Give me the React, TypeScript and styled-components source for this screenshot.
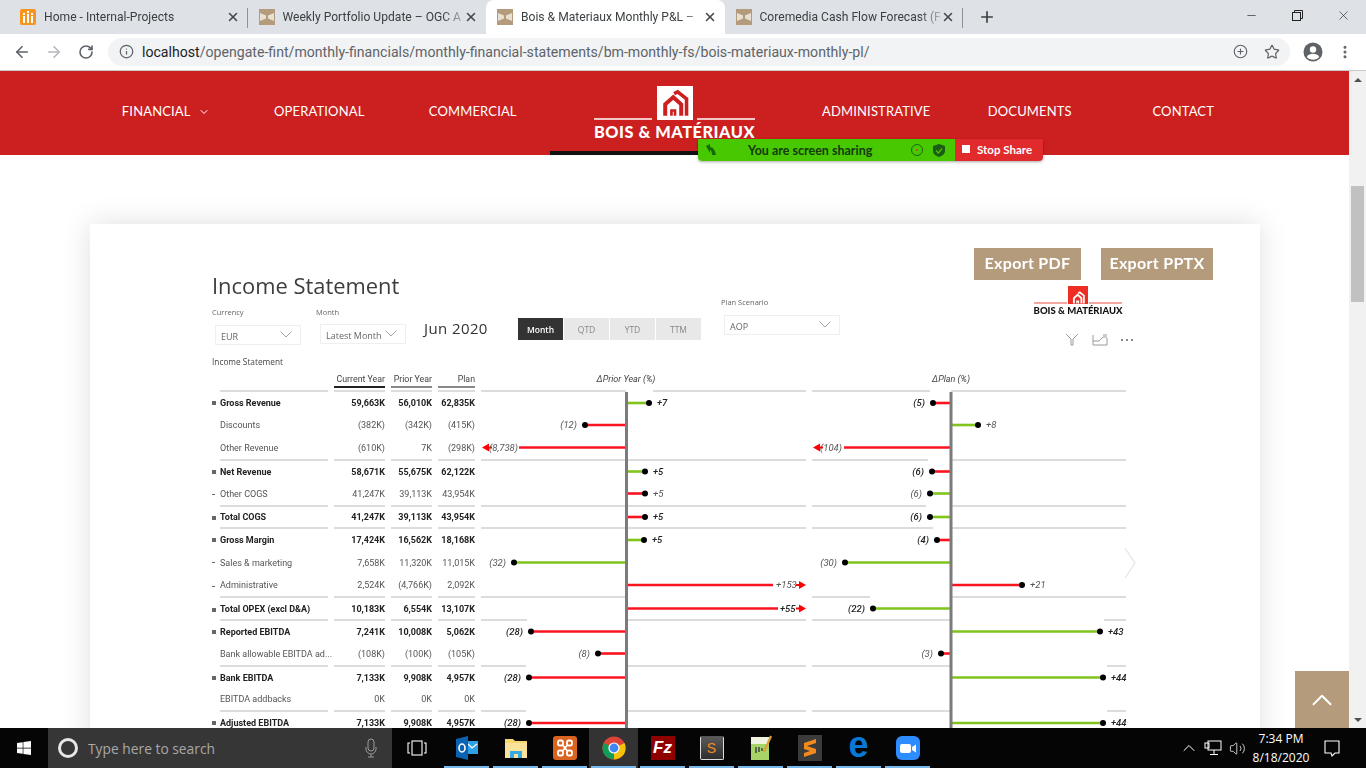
import styled, { createGlobalStyle } from 'styled-components'
import { ArrowLeft, ArrowRight, ChevronDown, ChevronUp, Info, Minus, MoreVertical, Plus, PlusCircle, RotateCw, Star, Volume2, X } from 'lucide-react'
import { FaWindows } from 'react-icons/fa'

const GlobalStyle = createGlobalStyle`
    html, body {
        margin: 0;
        padding: 0;
        background: #fff;
        overflow: hidden;
    }
    * {
        box-sizing: border-box;
    }
`

const tabs = [
    { title: 'Home - Internal-Projects', home: true },
    { title: 'Weekly Portfolio Update – OGC A' },
    { title: 'Bois & Materiaux Monthly P&L –', active: true },
    { title: 'Coremedia Cash Flow Forecast (F' }
]

type Delta = {
    v: number
    text: string
    color: 'red' | 'green'
    arrow?: number
    gap?: number
}

type Row = {
    label: string
    marker?: 'total' | 'minus'
    cur: string
    prior: string
    plan: string
    h: number
    sep?: boolean
    seps1?: number[][]
    seps2?: number[][]
    d1?: Delta
    d2?: Delta
}

const AXIS1 = 145.5
const AXIS2 = 139
const WIDTH1 = 325
const WIDTH2 = 314

const rows: Row[] = [
    { label: 'Gross Revenue', marker: 'total', cur: '59,663K', prior: '56,010K', plan: '62,835K', h: 22, d1: { v: 22.5, text: '+7', color: 'green' }, d2: { v: -18, text: '(5)', color: 'red' } },
    { label: 'Discounts', cur: '(382K)', prior: '(342K)', plan: '(415K)', h: 22, d1: { v: -41.5, text: '(12)', color: 'red' }, d2: { v: 27, text: '+8', color: 'green' } },
    { label: 'Other Revenue', cur: '(610K)', prior: '7K', plan: '(298K)', h: 25, sep: true, seps1: [[0, 325]], seps2: [[0, 116], [139, 314]], d1: { v: -107.5, text: '(8,738)', color: 'red', arrow: -144.5, gap: 1 }, d2: { v: -107, text: '(104)', color: 'red', arrow: -138, gap: 2 } },
    { label: 'Net Revenue', marker: 'total', cur: '58,671K', prior: '55,675K', plan: '62,122K', h: 21, d1: { v: 18.5, text: '+5', color: 'green' }, d2: { v: -19, text: '(6)', color: 'red' } },
    { label: 'Other COGS', marker: 'minus', cur: '41,247K', prior: '39,113K', plan: '43,954K', h: 25, sep: true, seps1: [[0, 325]], seps2: [[0, 114], [139, 314]], d1: { v: 18.5, text: '+5', color: 'red' }, d2: { v: -21, text: '(6)', color: 'green' } },
    { label: 'Total COGS', marker: 'total', cur: '41,247K', prior: '39,113K', plan: '43,954K', h: 22, sep: true, seps1: [[0, 325]], seps2: [[0, 121], [139, 314]], d1: { v: 18.5, text: '+5', color: 'red' }, d2: { v: -21, text: '(6)', color: 'green' } },
    { label: 'Gross Margin', marker: 'total', cur: '17,424K', prior: '16,562K', plan: '18,168K', h: 22, d1: { v: 17.5, text: '+5', color: 'green' }, d2: { v: -14, text: '(4)', color: 'red' } },
    { label: 'Sales & marketing', marker: 'minus', cur: '7,658K', prior: '11,320K', plan: '11,015K', h: 23, d1: { v: -112.5, text: '(32)', color: 'green' }, d2: { v: -106, text: '(30)', color: 'green' } },
    { label: 'Administrative', marker: 'minus', cur: '2,524K', prior: '(4,766K)', plan: '2,092K', h: 24, sep: true, seps1: [[0, 145.5]], seps2: [[0, 58], [139, 314]], d1: { v: 146.5, text: '+153', color: 'red', arrow: 179.5, gap: 3 }, d2: { v: 71, text: '+21', color: 'red' } },
    { label: 'Total OPEX (excl D&A)', marker: 'total', cur: '10,183K', prior: '6,554K', plan: '13,107K', h: 23, sep: true, seps1: [[0, 46], [145.5, 325]], seps2: [[0, 139], [292, 314]], d1: { v: 151.5, text: '+55', color: 'red', arrow: 179.5, gap: 2 }, d2: { v: -78, text: '(22)', color: 'green' } },
    { label: 'Reported EBITDA', marker: 'total', cur: '7,241K', prior: '10,008K', plan: '5,062K', h: 21, d1: { v: -95.5, text: '(28)', color: 'red' }, d2: { v: 149, text: '+43', color: 'green' } },
    { label: 'Bank allowable EBITDA ad...', cur: '(108K)', prior: '(100K)', plan: '(105K)', h: 25, sep: true, seps1: [[0, 45], [145.5, 325]], seps2: [[0, 139], [295, 314]], d1: { v: -28.5, text: '(8)', color: 'red' }, d2: { v: -10, text: '(3)', color: 'red' } },
    { label: 'Bank EBITDA', marker: 'total', cur: '7,133K', prior: '9,908K', plan: '4,957K', h: 21, d1: { v: -97.5, text: '(28)', color: 'red' }, d2: { v: 152, text: '+44', color: 'green' } },
    { label: 'EBITDA addbacks', cur: '0K', prior: '0K', plan: '0K', h: 24, sep: true, seps1: [[0, 45], [145.5, 325]], seps2: [[0, 139], [295, 314]] },
    { label: 'Adjusted EBITDA', marker: 'total', cur: '7,133K', prior: '9,908K', plan: '4,957K', h: 22, d1: { v: -97.5, text: '(28)', color: 'red' }, d2: { v: 152, text: '+44', color: 'green' } }
]

function TanIcon() {
    return (
        <svg width="16" height="16" viewBox="0 0 16 16">
            <rect width="16" height="16" fill="#b39b7c" />
            <path d="M1 4 L7 6.5 V9.5 L1 12 Z M15 4 L9 6.5 V9.5 L15 12 Z" fill="#e8e0d2" />
        </svg>
    )
}

function HomeIcon() {
    return (
        <svg width="16" height="16" viewBox="0 0 16 16">
            <rect width="16" height="16" rx="2" fill="#f7941d" />
            <path d="M3 14 V7 H5 V14 Z M7 14 V5 H9 V14 Z M11 14 V7 H13 V14 Z" fill="#fff" />
            <circle cx="4" cy="5" r="1.2" fill="#fff" />
            <circle cx="8" cy="3" r="1.2" fill="#fff" />
            <circle cx="12" cy="5" r="1.2" fill="#fff" />
        </svg>
    )
}

function HouseMark({ size, color }: { size: number; color: string }) {
    return (
        <svg width={size} height={size * 0.9} viewBox="0 0 36 32" fill="none" stroke={color}>
            <path d="M7 30 V17 L16 9 L25 17 V30" strokeWidth="4.5" />
            <path d="M14 30 V24 H18 V30" strokeWidth="3" />
            <path d="M17 5 L21 3 L31 11 V30" strokeWidth="4" />
        </svg>
    )
}

function DeltaChart({ row, delta, axis, width, seps }: { row: Row; delta?: Delta; axis: number; width: number; seps?: number[][] }) {
    const cy = row.sep ? (row.h - 2) / 2 : row.h / 2
    const strong = row.marker === 'total'
    const stroke = delta?.color === 'green' ? '#80c41c' : '#fb1420'
    const end = delta ? axis + delta.v : 0
    const right = delta ? delta.v > 0 : false
    const tip = delta?.arrow !== undefined ? axis + delta.arrow : 0
    const gap = delta?.arrow !== undefined ? delta.gap ?? 2 : 8
    const dir = right ? -1 : 1

    return (
        <ChartSvg width={width} height={row.h}>
            {seps?.map((s, i) => (
                <rect key={i} x={s[0]} y={row.h - 2} width={s[1] - s[0]} height="2" fill="#dcdcdc" />
            ))}
            {delta && <line x1={axis} x2={end} y1={cy} y2={cy} stroke={stroke} strokeWidth="2.6" />}
            {delta && delta.arrow === undefined && <circle cx={end} cy={cy} r="3" fill="#000" />}
            {delta && delta.arrow !== undefined && (
                <g fill="#ff0000">
                    <polygon points={`${tip},${cy} ${tip + dir * 7},${cy - 4} ${tip + dir * 7},${cy + 4}`} />
                    <rect x={right ? tip - 10 : tip + 7} y={cy - 1} width="3" height="2" />
                </g>
            )}
            {delta && (
                <ChartLabel $strong={strong} x={right ? end + gap : end - gap} y={cy + 3} textAnchor={right ? 'start' : 'end'}>
                    {delta.text}
                </ChartLabel>
            )}
            <rect x={axis - 1.5} y="0" width="3" height={row.h} fill="#7b7b7b" />
        </ChartSvg>
    )
}

export default function App() {
    return (
        <Root>
            <GlobalStyle />
            <TabStrip>
                {tabs.map(tab => (
                    <Tab key={tab.title} $active={tab.active}>
                        {tab.home ? <HomeIcon /> : <TanIcon />}
                        <TabTitle>{tab.title}</TabTitle>
                        <X size={14} strokeWidth={2.6} color="#45484c" />
                    </Tab>
                ))}
                <NewTab>
                    <Plus size={18} strokeWidth={2.2} color="#3c4043" />
                </NewTab>
                <WindowControls>
                    <WindowButton><Minus size={13} strokeWidth={1.2} /></WindowButton>
                    <WindowButton><RestoreGlyph /></WindowButton>
                    <WindowButton><X size={15} strokeWidth={1} /></WindowButton>
                </WindowControls>
            </TabStrip>

            <Toolbar>
                <ToolButton><ArrowLeft size={18} color="#5f6368" strokeWidth={2.2} /></ToolButton>
                <ToolButton><ArrowRight size={18} color="#b5b8bc" strokeWidth={2.2} /></ToolButton>
                <ToolButton><RotateCw size={16} color="#5f6368" strokeWidth={2.4} /></ToolButton>
                <UrlPill>
                    <Info size={15} color="#5f6368" strokeWidth={2} />
                    <UrlText><b>localhost</b>/opengate-fint/monthly-financials/monthly-financial-statements/bm-monthly-fs/bois-materiaux-monthly-pl/</UrlText>
                    <PillActions>
                        <ToolButton><PlusCircle size={15} color="#5f6368" strokeWidth={1.8} /></ToolButton>
                        <ToolButton><Star size={16} color="#5f6368" strokeWidth={1.8} /></ToolButton>
                    </PillActions>
                </UrlPill>
                <ToolbarEnd>
                    <ToolButton>
                        <svg width="20" height="20" viewBox="0 0 20 20">
                            <circle cx="10" cy="10" r="9.5" fill="#5f6368" />
                            <circle cx="10" cy="7.5" r="3.2" fill="#fff" />
                            <path d="M3.8 15 C5 12.4 7.5 11.8 10 11.8 C12.5 11.8 15 12.4 16.2 15 C14.8 16.8 12.5 17.8 10 17.8 C7.5 17.8 5.2 16.8 3.8 15 Z" fill="#fff" />
                        </svg>
                    </ToolButton>
                    <ToolButton><MoreVertical size={16} color="#5f6368" strokeWidth={2.6} /></ToolButton>
                </ToolbarEnd>
            </Toolbar>

            <Viewport>
                <Page>
                    <Nav>
                        <NavInner>
                            <NavItem>FINANCIAL <ChevronDown size={12} strokeWidth={2} /></NavItem>
                            <NavItem>OPERATIONAL</NavItem>
                            <NavItem>COMMERCIAL</NavItem>
                            <NavLogo>
                                <LogoTop>
                                    <LogoRule />
                                    <LogoBox><HouseMark size={32} color="#cc2020" /></LogoBox>
                                    <LogoRule />
                                </LogoTop>
                                <LogoName>BOIS &amp; MATÉRIAUX</LogoName>
                            </NavLogo>
                            <NavItem>ADMINISTRATIVE</NavItem>
                            <NavItem>DOCUMENTS</NavItem>
                            <NavItem>CONTACT</NavItem>
                        </NavInner>
                    </Nav>

                    <Card>
                        <Report>
                            <ReportHead>
                                <HeadLeft>
                                    <Title>Income Statement</Title>
                                    <FilterRow>
                                        <Field $width={104}>
                                            <FieldLabel>Currency</FieldLabel>
                                            <Select $width={86} $top={9} $left={3}>EUR<SelectArrow /></Select>
                                        </Field>
                                        <Field $width={108}>
                                            <FieldLabel>Month</FieldLabel>
                                            <Select $width={86} $top={8} $left={4}>Latest Month<SelectArrow /></Select>
                                        </Field>
                                        <PeriodText>Jun 2020</PeriodText>
                                        <Segments>
                                            <Segment $active>Month</Segment>
                                            <Segment>QTD</Segment>
                                            <Segment>YTD</Segment>
                                            <Segment>TTM</Segment>
                                        </Segments>
                                    </FilterRow>
                                </HeadLeft>
                                <PlanField>
                                    <FieldLabel>Plan Scenario</FieldLabel>
                                    <Select $width={116} $top={9} $left={3}>AOP<SelectArrow /></Select>
                                </PlanField>
                                <HeadRight>
                                    <ExportRow>
                                        <ExportButton $width={107}>Export PDF</ExportButton>
                                        <ExportButton $width={112}>Export PPTX</ExportButton>
                                    </ExportRow>
                                    <SmallLogo>
                                        <SmallLogoTop>
                                            <SmallRule />
                                            <SmallBox><HouseMark size={15} color="#fff" /></SmallBox>
                                            <SmallRule />
                                        </SmallLogoTop>
                                        <SmallName>BOIS &amp; MATÉRIAUX</SmallName>
                                    </SmallLogo>
                                    <VisualIcons>
                                        <svg width="14" height="13" viewBox="0 0 14 13" fill="none" stroke="#9a9a9a" strokeWidth="1">
                                            <path d="M1 1 L6 6 V12 H8 V6 L13 1" />
                                        </svg>
                                        <svg width="16" height="12" viewBox="0 0 16 12" fill="none" stroke="#9a9a9a" strokeWidth="1">
                                            <path d="M1 1 V11 H15 V4 M1 7 H7 L11 3 H15 M11 1 H15" />
                                        </svg>
                                        <Dots><i /><i /><i /></Dots>
                                    </VisualIcons>
                                </HeadRight>
                            </ReportHead>

                            <VisualTitle>Income Statement</VisualTitle>
                            <GridRow $h={22}>
                                <LabelHead />
                                <HeadCell $line="#222">Current Year</HeadCell>
                                <HeadCell $line="#888">Prior Year</HeadCell>
                                <HeadCell $line="#888">Plan</HeadCell>
                                <ChartHead>
                                    <ChartHeadText $pad={35}>ΔPrior Year (%)</ChartHeadText>
                                    <svg width={WIDTH1} height="2">
                                        <rect x="0" width="145" height="2" fill="#dcdcdc" />
                                        <rect x="172" width="153" height="2" fill="#dcdcdc" />
                                    </svg>
                                </ChartHead>
                                <ChartHead>
                                    <ChartHeadText $pad={36}>ΔPlan (%)</ChartHeadText>
                                    <svg width={WIDTH2} height="2">
                                        <rect x="0" width="118" height="2" fill="#dcdcdc" />
                                        <rect x="139" width="175" height="2" fill="#dcdcdc" />
                                    </svg>
                                </ChartHead>
                            </GridRow>
                            {rows.map(row => (
                                <GridRow key={row.label} $h={row.h}>
                                    <LabelCell>
                                        <MarkerBox>{row.marker && <Marker $kind={row.marker} />}</MarkerBox>
                                        <LabelText $strong={row.marker === 'total'} $sep={row.sep}>{row.label}</LabelText>
                                    </LabelCell>
                                    <NumCell $strong={row.marker === 'total'} $sep={row.sep}>{row.cur}</NumCell>
                                    <NumCell $strong={row.marker === 'total'} $sep={row.sep}>{row.prior}</NumCell>
                                    <NumCell $strong={row.marker === 'total'} $sep={row.sep}>{row.plan}</NumCell>
                                    <DeltaChart row={row} delta={row.d1} axis={AXIS1} width={WIDTH1} seps={row.seps1} />
                                    <DeltaChart row={row} delta={row.d2} axis={AXIS2} width={WIDTH2} seps={row.seps2} />
                                </GridRow>
                            ))}
                        </Report>
                        <PageArrow width="12" height="32" viewBox="0 0 12 32" fill="none" stroke="#e4e4e4" strokeWidth="1.2">
                            <path d="M1 1 L11 16 L1 31" />
                        </PageArrow>
                    </Card>

                    <ScrollTop>
                        <ChevronUp size={34} strokeWidth={1.4} color="#fff" />
                    </ScrollTop>
                </Page>
                <Scrollbar>
                    <ScrollArrow $up />
                    <ScrollThumb />
                    <ScrollArrow />
                </Scrollbar>
            </Viewport>

            <Taskbar>
                <StartButton><FaWindows size={16} color="#fff" /></StartButton>
                <SearchBox>
                    <Cortana />
                    <SearchText>Type here to search</SearchText>
                    <svg width="12" height="20" viewBox="0 0 12 20" fill="none" stroke="#9b9b9b" strokeWidth="1">
                        <rect x="3" y="1" width="6" height="12" rx="3" />
                        <path d="M1 9 V11 A5 5 0 0 0 11 11 V9 M6 16 V19 M3 19 H9" />
                    </svg>
                </SearchBox>
                <TaskItem>
                    <svg width="20" height="16" viewBox="0 0 20 16" fill="none" stroke="#fff" strokeWidth="1.1">
                        <rect x="5" y="1" width="10" height="14" />
                        <path d="M3 3 H1 V13 H3 M17 3 H19 V13 H17" />
                    </svg>
                </TaskItem>
                <TaskApps>
                    <TaskItem $running>
                        <svg width="24" height="24" viewBox="0 0 24 24">
                            <rect x="11" y="5" width="12" height="13" fill="#2f9fe8" />
                            <path d="M13 8 L17 12 L22 8" fill="none" stroke="#fff" strokeWidth="1.3" />
                            <path d="M1 3 L13 0 V24 L1 21 Z" fill="#0a62b0" />
                            <ellipse cx="7" cy="12" rx="3" ry="4" fill="none" stroke="#fff" strokeWidth="1.6" />
                        </svg>
                    </TaskItem>
                    <TaskItem $running>
                        <svg width="24" height="24" viewBox="0 0 24 24">
                            <path d="M1 3 H9 L11 5 H23 V22 H1 Z" fill="#f5d76e" />
                            <rect x="1" y="7" width="22" height="15" fill="#fbe29a" />
                            <path d="M6 22 V15 H18 V22 H14 V18 H10 V22 Z" fill="#36a9e1" />
                        </svg>
                    </TaskItem>
                    <TaskItem $running>
                        <svg width="24" height="24" viewBox="0 0 24 24">
                            <rect width="24" height="24" rx="3" fill="#d9641f" />
                            <g fill="none" stroke="#fff" strokeWidth="1.8">
                                <rect x="5" y="4.5" width="5" height="5" rx="1.8" />
                                <rect x="14" y="4.5" width="5" height="5" rx="1.8" />
                                <rect x="5" y="14.5" width="5" height="5" rx="1.8" />
                                <rect x="14" y="14.5" width="5" height="5" rx="1.8" />
                                <path d="M10 9.5 L14 14.5 M14 9.5 L10 14.5" />
                            </g>
                        </svg>
                    </TaskItem>
                    <TaskItem $running $active>
                        <svg width="24" height="24" viewBox="0 0 24 24">
                            <circle cx="12" cy="12" r="11.5" fill="#db4437" />
                            <path d="M12 12 L22.5 7 A11.5 11.5 0 0 1 12 23.5 Z" fill="#f4c20d" />
                            <path d="M12 12 L12 23.5 A11.5 11.5 0 0 1 1.6 7 Z" fill="#0f9d58" />
                            <circle cx="12" cy="12" r="5.6" fill="#fff" />
                            <circle cx="12" cy="12" r="4.4" fill="#4285f4" />
                        </svg>
                    </TaskItem>
                    <TaskItem $running><FileZilla>Fz</FileZilla></TaskItem>
                    <TaskItem $running><SublimeBox>S</SublimeBox></TaskItem>
                    <TaskItem $running>
                        <svg width="24" height="26" viewBox="0 0 24 26">
                            <rect x="2" y="2" width="18" height="23" fill="#a6d468" />
                            <rect x="2" y="2" width="18" height="7" fill="#eef3e2" />
                            <path d="M7 12 V18 M10 12 V17 M13 13 V16" stroke="#333" strokeWidth="1.3" />
                            <path d="M22 1 L15 17" stroke="#d9a13b" strokeWidth="2.2" />
                        </svg>
                    </TaskItem>
                    <TaskItem $running>
                        <svg width="24" height="26" viewBox="0 0 24 26">
                            <rect width="24" height="26" fill="#3b3b3b" />
                            <g fill="#f48a1e">
                                <polygon points="18,4 6,8 6,12 18,8" />
                                <polygon points="6,10 18,14 18,18 6,14" />
                                <polygon points="18,14 6,18 6,22 18,18" />
                            </g>
                        </svg>
                    </TaskItem>
                    <TaskItem $running><EdgeMark>e</EdgeMark></TaskItem>
                    <TaskItem $running>
                        <svg width="24" height="24" viewBox="0 0 24 24">
                            <rect width="24" height="24" rx="6" fill="#2d8cff" />
                            <rect x="4" y="8" width="11" height="9" rx="2" fill="#fff" />
                            <path d="M16 11 L20 8.5 V16.5 L16 14 Z" fill="#fff" />
                        </svg>
                    </TaskItem>
                </TaskApps>
                <Tray>
                    <TrayItem><ChevronUp size={20} strokeWidth={1.2} color="#fff" /></TrayItem>
                    <TrayItem>
                        <svg width="18" height="18" viewBox="0 0 18 18" fill="none" stroke="#fff" strokeWidth="1">
                            <rect x="4" y="2" width="13" height="9" />
                            <rect x="1" y="4" width="4" height="5" />
                            <path d="M10 11 V15 M6 15.5 H14" />
                        </svg>
                    </TrayItem>
                    <TrayItem><Volume2 size={17} strokeWidth={1.1} color="#fff" /></TrayItem>
                    <Clock>
                        <span>7:34 PM</span>
                        <span>8/18/2020</span>
                    </Clock>
                    <Notify>
                        <svg width="18" height="18" viewBox="0 0 18 18" fill="none" stroke="#fff" strokeWidth="1.1">
                            <path d="M2 2 H16 V14 H12 L9 17 L8 14 H2 Z" />
                        </svg>
                    </Notify>
                </Tray>
            </Taskbar>

            <ShareBanner>
                <ShareGreen>
                    <svg width="12" height="12" viewBox="0 0 12 12">
                        <path d="M1 2 L5 0 V3 C8 3 10 6 11 11 H7 C7 8 6 6 5 6 V9 Z" fill="#166b0c" />
                    </svg>
                    <ShareText>You are screen sharing</ShareText>
                    <svg width="14" height="14" viewBox="0 0 14 14" fill="none">
                        <circle cx="7" cy="7" r="5.5" stroke="#1c6a12" />
                        <circle cx="7" cy="7" r="1" fill="#c83a2a" />
                    </svg>
                    <svg width="12" height="13" viewBox="0 0 12 13">
                        <path d="M6 0 L12 2 V7 C12 10 9 12 6 13 C3 12 0 10 0 7 V2 Z" fill="#1d5c14" />
                        <path d="M3 6.5 L5.3 9 L9 4.5" fill="none" stroke="#48c800" strokeWidth="1.2" />
                    </svg>
                </ShareGreen>
                <ShareStop>
                    <StopSquare />
                    Stop Share
                </ShareStop>
            </ShareBanner>
        </Root>
    )
}

function RestoreGlyph() {
    return (
        <svg width="11" height="11" viewBox="0 0 11 11" fill="none" stroke="#222" strokeWidth="1">
            <rect x="0.5" y="2.5" width="8" height="8" />
            <path d="M2.5 2.5 V0.5 H10.5 V8.5 H8.5" />
        </svg>
    )
}

function SelectArrow() {
    return (
        <SelectChevron width="12" height="7" viewBox="0 0 12 7" fill="none" stroke="#8a8a8a" strokeWidth="0.8">
            <path d="M0.5 0.5 L6 6 L11.5 0.5" />
        </SelectChevron>
    )
}

const Root = styled.div`
    position: relative;
    width: 1366px;
    height: 768px;
    display: flex;
    flex-direction: column;
    overflow: hidden;
    font-family: 'Roboto', 'Liberation Sans', sans-serif;
`

const TabStrip = styled.div`
    height: 34px;
    flex: none;
    display: flex;
    align-items: stretch;
    padding-left: 9px;
    background: #dee1e6;
`

const Tab = styled.div<{ $active?: boolean }>`
    width: 238.5px;
    display: flex;
    align-items: center;
    gap: 8px;
    padding: 0 8px 0 11px;
    background: ${props => (props.$active ? '#fff' : 'transparent')};
    border-radius: 8px 8px 0 0;
    position: relative;
    &:nth-child(1)::after,
    &:nth-child(4)::after {
        content: '';
        position: absolute;
        right: 0;
        top: 8px;
        height: 20px;
        width: 1px;
        background: #8f9296;
    }
`

const TabTitle = styled.span`
    flex: 1;
    min-width: 0;
    margin-right: -8px;
    font-size: 12.1px;
    color: #3c4043;
    white-space: nowrap;
    -webkit-mask-image: linear-gradient(to right, #000 88%, rgba(0, 0, 0, 0.25) 100%);
    mask-image: linear-gradient(to right, #000 88%, rgba(0, 0, 0, 0.25) 100%);
`

const NewTab = styled.div`
    width: 22px;
    margin-left: 13px;
    display: flex;
    align-items: center;
    justify-content: center;
`

const WindowControls = styled.div`
    margin-left: auto;
    display: flex;
`

const WindowButton = styled.div`
    width: 46px;
    display: flex;
    align-items: center;
    justify-content: center;
    color: #222;
    padding-bottom: 4px;
`

const Toolbar = styled.div`
    height: 37px;
    flex: none;
    display: flex;
    align-items: center;
    padding: 0 0 1px 6px;
    background: #fff;
    border-bottom: 1px solid #c9c9c9;
`

const ToolButton = styled.div`
    width: 32px;
    height: 28px;
    display: flex;
    align-items: center;
    justify-content: center;
`

const UrlPill = styled.div`
    width: 1182px;
    height: 28px;
    margin-left: 6px;
    padding: 0 2px 0 11px;
    display: flex;
    align-items: center;
    background: #f1f3f4;
    border-radius: 14px;
`

const UrlText = styled.div`
    margin-left: 8px;
    font-size: 14.12px;
    color: #5f6368;
    white-space: nowrap;
    b {
        font-weight: 400;
        color: #202124;
    }
`

const PillActions = styled.div`
    margin-left: auto;
    display: flex;
`

const ToolbarEnd = styled.div`
    display: flex;
    padding-left: 7px;
`

const Viewport = styled.div`
    flex: 1;
    min-height: 0;
    display: flex;
`

const Page = styled.div`
    position: relative;
    flex: 1;
    min-width: 0;
    overflow: hidden;
    background: #fff;
`

const Nav = styled.div`
    height: 84px;
    background: #cc2020;
`

const NavInner = styled.div`
    width: 1170px;
    height: 100%;
    margin-left: 89px;
    display: grid;
    grid-template-columns: repeat(3, 153.5px) 250px repeat(3, 153.5px);
`

const NavItem = styled.div`
    display: flex;
    align-items: center;
    justify-content: center;
    gap: 7px;
    padding-bottom: 5px;
    font-family: 'Lato', sans-serif;
    font-size: 13px;
    font-weight: 400;
    letter-spacing: 0.15px;
    color: #fff;
    &:first-child svg {
        margin-top: 2px;
    }
`

const NavLogo = styled.div`
    display: flex;
    flex-direction: column;
    align-items: center;
    padding-top: 15px;
    border-bottom: 4px solid #111;
`

const LogoTop = styled.div`
    width: 161px;
    display: flex;
    align-items: flex-end;
    justify-content: space-between;
`

const LogoRule = styled.div`
    width: 58px;
    height: 2px;
    background: #f3c5c5;
`

const LogoBox = styled.div`
    width: 36px;
    height: 34px;
    display: flex;
    align-items: flex-end;
    justify-content: center;
    background: #fff;
    padding-bottom: 2px;
`

const LogoName = styled.div`
    margin-top: 4px;
    font-family: 'Lato', sans-serif;
    font-size: 16.3px;
    line-height: 16px;
    font-weight: 900;
    letter-spacing: 0.55px;
    color: #fff;
    white-space: nowrap;
`

const Card = styled.div`
    position: relative;
    width: 1170px;
    height: 700px;
    margin: 69px 0 0 90px;
    padding: 24px 0 0 122px;
    background: #fff;
    box-shadow: 0 0 28px rgba(0, 0, 0, 0.13);
`

const Report = styled.div`
    filter: blur(0.35px);
    font-family: 'Open Sans', 'Liberation Sans', sans-serif;
`

const ReportHead = styled.div`
    height: 106px;
    display: flex;
    align-items: flex-start;
`

const HeadLeft = styled.div`
    width: 509px;
    padding-top: 24px;
`

const Title = styled.div`
    font-size: 21.9px;
    line-height: 28px;
    color: #3d3d3d;
`

const FilterRow = styled.div`
    display: flex;
    align-items: flex-start;
    margin-top: 8px;
`

const Field = styled.div<{ $width: number }>`
    width: ${props => props.$width}px;
`

const FieldLabel = styled.div`
    font-size: 7.5px;
    line-height: 8px;
    color: #666;
`

const Select = styled.div<{ $width: number; $top: number; $left: number }>`
    position: relative;
    width: ${props => props.$width}px;
    height: 20px;
    margin: ${props => props.$top}px 0 0 ${props => props.$left}px;
    padding: 2px 0 0 5px;
    display: flex;
    align-items: center;
    border: 1px solid #efefef;
    font-size: 9px;
    color: #666;
`

const SelectChevron = styled.svg`
    position: absolute;
    right: 8px;
    top: 5px;
`

const PeriodText = styled.div`
    width: 94px;
    margin-top: 10px;
    font-size: 15px;
    line-height: 20px;
    letter-spacing: 0.4px;
    color: #333;
`

const Segments = styled.div`
    margin-top: 10px;
    display: flex;
    gap: 1px;
`

const Segment = styled.div<{ $active?: boolean }>`
    width: 45px;
    height: 22px;
    display: flex;
    align-items: center;
    justify-content: center;
    font-size: 8.5px;
    font-weight: ${props => (props.$active ? 600 : 400)};
    color: ${props => (props.$active ? '#fff' : '#888')};
    background: ${props => (props.$active ? '#333' : '#e8e8e8')};
`

const PlanField = styled.div`
    width: 253px;
    padding-top: 50px;
`

const HeadRight = styled.div`
    display: flex;
    flex-direction: column;
`

const ExportRow = styled.div`
    display: flex;
    gap: 20px;
`

const ExportButton = styled.div<{ $width: number }>`
    width: ${props => props.$width}px;
    height: 32px;
    padding-bottom: 3px;
    display: flex;
    align-items: center;
    justify-content: center;
    background: #b39b7c;
    color: #fff;
    font-family: 'Lato', sans-serif;
    font-size: 16px;
    font-weight: 700;
    letter-spacing: 0.3px;
`

const SmallLogo = styled.div`
    width: 88px;
    margin: 6px 0 0 60px;
    display: flex;
    flex-direction: column;
    align-items: center;
`

const SmallLogoTop = styled.div`
    width: 100%;
    display: flex;
    align-items: flex-end;
    justify-content: space-between;
`

const SmallRule = styled.div`
    width: 33px;
    height: 2px;
    background: #f4a6a0;
`

const SmallBox = styled.div`
    width: 20px;
    height: 18px;
    display: flex;
    align-items: flex-end;
    justify-content: center;
    background: #ee2e24;
`

const SmallName = styled.div`
    margin-top: 2px;
    font-family: 'Lato', sans-serif;
    font-size: 9.5px;
    line-height: 10px;
    font-weight: 900;
    color: #111;
    white-space: nowrap;
`

const VisualIcons = styled.div`
    width: 72px;
    margin: 17px 0 0 91px;
    display: flex;
    align-items: center;
    gap: 13px;
`

const Dots = styled.div`
    display: flex;
    gap: 3px;
    i {
        width: 2px;
        height: 2px;
        background: #888;
    }
`

const VisualTitle = styled.div`
    height: 16px;
    font-size: 8.3px;
    line-height: 16px;
    color: #444;
`

const GridRow = styled.div<{ $h: number }>`
    height: ${props => props.$h}px;
    display: grid;
    grid-template-columns: 116px 51px 41px 37px 325px 314px;
    column-gap: 6px;
    font-family: 'Roboto', sans-serif;
`

const LabelHead = styled.div`
    margin-left: 8px;
    border-bottom: 2px solid #dcdcdc;
`

const HeadCell = styled.div<{ $line: string }>`
    position: relative;
    padding-top: 2px;
    font-size: 8.8px;
    line-height: 14px;
    text-align: right;
    white-space: nowrap;
    color: #444;
    border-bottom: 2px solid #dcdcdc;
    &::after {
        content: '';
        position: absolute;
        left: 0;
        right: 0;
        bottom: 2px;
        height: 2px;
        background: ${props => props.$line};
    }
`

const ChartHead = styled.div`
    display: flex;
    flex-direction: column;
    svg {
        display: block;
    }
`

const ChartHeadText = styled.div<{ $pad: number }>`
    flex: 1;
    padding: 2px ${props => props.$pad}px 0 0;
    font-size: 9px;
    line-height: 14px;
    font-style: italic;
    text-align: center;
    color: #444;
`

const LabelCell = styled.div`
    display: flex;
    min-width: 0;
`

const MarkerBox = styled.div`
    width: 8px;
    flex: none;
    display: flex;
    align-items: center;
`

const Marker = styled.span<{ $kind: 'total' | 'minus' }>`
    display: block;
    width: ${props => (props.$kind === 'total' ? 4 : 3)}px;
    height: ${props => (props.$kind === 'total' ? 4 : 1)}px;
    background: #666;
`

const LabelText = styled.div<{ $strong?: boolean; $sep?: boolean }>`
    flex: 1;
    min-width: 0;
    display: flex;
    align-items: center;
    font-size: 9px;
    font-weight: ${props => (props.$strong ? 700 : 400)};
    color: ${props => (props.$strong ? '#222' : '#555')};
    white-space: nowrap;
    border-bottom: ${props => (props.$sep ? '2px solid #dcdcdc' : 'none')};
`

const NumCell = styled.div<{ $strong?: boolean; $sep?: boolean }>`
    display: flex;
    align-items: center;
    justify-content: flex-end;
    font-size: 9px;
    font-weight: ${props => (props.$strong ? 700 : 400)};
    color: ${props => (props.$strong ? '#222' : '#555')};
    white-space: nowrap;
    border-bottom: ${props => (props.$sep ? '2px solid #dcdcdc' : 'none')};
`

const ChartSvg = styled.svg`
    display: block;
    overflow: visible;
`

const ChartLabel = styled.text<{ $strong?: boolean }>`
    font-size: 9.5px;
    font-style: italic;
    font-weight: ${props => (props.$strong ? 500 : 400)};
    fill: ${props => (props.$strong ? '#222' : '#555')};
`

const PageArrow = styled.svg`
    position: absolute;
    left: 1034px;
    top: 323px;
`

const ScrollTop = styled.div`
    position: absolute;
    right: 0;
    bottom: 0;
    width: 54px;
    height: 57px;
    display: flex;
    align-items: center;
    justify-content: center;
    background: #b39b7c;
`

const Scrollbar = styled.div`
    width: 17px;
    flex: none;
    display: flex;
    flex-direction: column;
    background: #f1f1f1;
`

const ScrollArrow = styled.div<{ $up?: boolean }>`
    height: 17px;
    flex: none;
    margin-top: ${props => (props.$up ? 0 : 'auto')};
    display: flex;
    align-items: center;
    justify-content: center;
    &::before {
        content: '';
        border-left: 4px solid transparent;
        border-right: 4px solid transparent;
        border-bottom: ${props => (props.$up ? '4px solid #505050' : 'none')};
        border-top: ${props => (props.$up ? 'none' : '4px solid #505050')};
    }
`

const ScrollThumb = styled.div`
    width: 13px;
    height: 116px;
    margin: 98px 0 0 2px;
    background: #c1c1c1;
`

const Taskbar = styled.div`
    height: 40px;
    flex: none;
    display: flex;
    align-items: stretch;
    background: #050505;
`

const StartButton = styled.div`
    width: 48px;
    display: flex;
    align-items: center;
    justify-content: center;
`

const SearchBox = styled.div`
    width: 344px;
    padding: 0 15px 0 10px;
    display: flex;
    align-items: center;
    background: #363636;
`

const Cortana = styled.div`
    width: 20px;
    height: 20px;
    flex: none;
    border: 3px solid #e6e6e6;
    border-radius: 50%;
`

const SearchText = styled.div`
    flex: 1;
    margin-left: 10px;
    font-family: 'Open Sans', sans-serif;
    font-size: 13.8px;
    color: #a8a8a8;
`

const TaskApps = styled.div`
    display: flex;
    margin-left: 1px;
`

const TaskItem = styled.div<{ $running?: boolean; $active?: boolean }>`
    position: relative;
    width: 49px;
    display: flex;
    align-items: center;
    justify-content: center;
    background: ${props => (props.$active ? '#333' : 'transparent')};
    &::after {
        content: '';
        display: ${props => (props.$running ? 'block' : 'none')};
        position: absolute;
        left: 2px;
        right: 2px;
        bottom: 0;
        height: 2px;
        background: #76b9ed;
    }
`

const FileZilla = styled.div`
    width: 24px;
    height: 24px;
    display: flex;
    align-items: center;
    justify-content: center;
    background: #8f0000;
    color: #fff;
    font-family: 'Liberation Sans', sans-serif;
    font-size: 17px;
    font-weight: 700;
    font-style: italic;
`

const SublimeBox = styled.div`
    width: 24px;
    height: 24px;
    display: flex;
    align-items: center;
    justify-content: center;
    background: linear-gradient(#5a5a5a, #2e2e2e);
    border: 1px solid #ddd;
    border-top-color: #555;
    border-radius: 2px;
    color: #f48a1e;
    font-family: 'Liberation Sans', sans-serif;
    font-size: 14px;
`

const EdgeMark = styled.div`
    font-family: 'Liberation Sans', sans-serif;
    font-size: 36px;
    line-height: 30px;
    font-weight: 700;
    color: #0a78d7;
    padding-bottom: 6px;
`

const Tray = styled.div`
    margin-left: auto;
    padding-right: 15px;
    display: flex;
`

const TrayItem = styled.div`
    width: 24px;
    display: flex;
    align-items: center;
    justify-content: center;
`

const Clock = styled.div`
    width: 64px;
    display: flex;
    flex-direction: column;
    align-items: center;
    justify-content: center;
    gap: 3px;
    font-family: 'Open Sans', sans-serif;
    font-size: 12px;
    line-height: 16px;
    color: #fff;
`

const Notify = styled.div`
    width: 38px;
    display: flex;
    align-items: center;
    justify-content: center;
`

const ShareBanner = styled.div`
    position: absolute;
    left: 698px;
    top: 139px;
    width: 345px;
    height: 22px;
    display: flex;
    border-radius: 0 0 4px 4px;
    overflow: hidden;
    box-shadow: 0 1px 3px rgba(0, 0, 0, 0.35);
    font-family: 'Lato', sans-serif;
`

const ShareGreen = styled.div`
    width: 257px;
    padding: 0 10px 0 7px;
    display: flex;
    align-items: center;
    background: #48c800;
    svg:last-child {
        margin-left: 9px;
    }
`

const ShareText = styled.div`
    flex: 1;
    padding-left: 31px;
    font-size: 12.5px;
    font-weight: 700;
    color: #143a0e;
    white-space: nowrap;
`

const ShareStop = styled.div`
    flex: 1;
    padding: 0 0 2px 7px;
    display: flex;
    align-items: center;
    gap: 7px;
    background: #e02a2c;
    color: #fff;
    font-size: 11.5px;
    font-weight: 700;
`

const StopSquare = styled.span`
    width: 8px;
    height: 8px;
    background: #fff;
`
